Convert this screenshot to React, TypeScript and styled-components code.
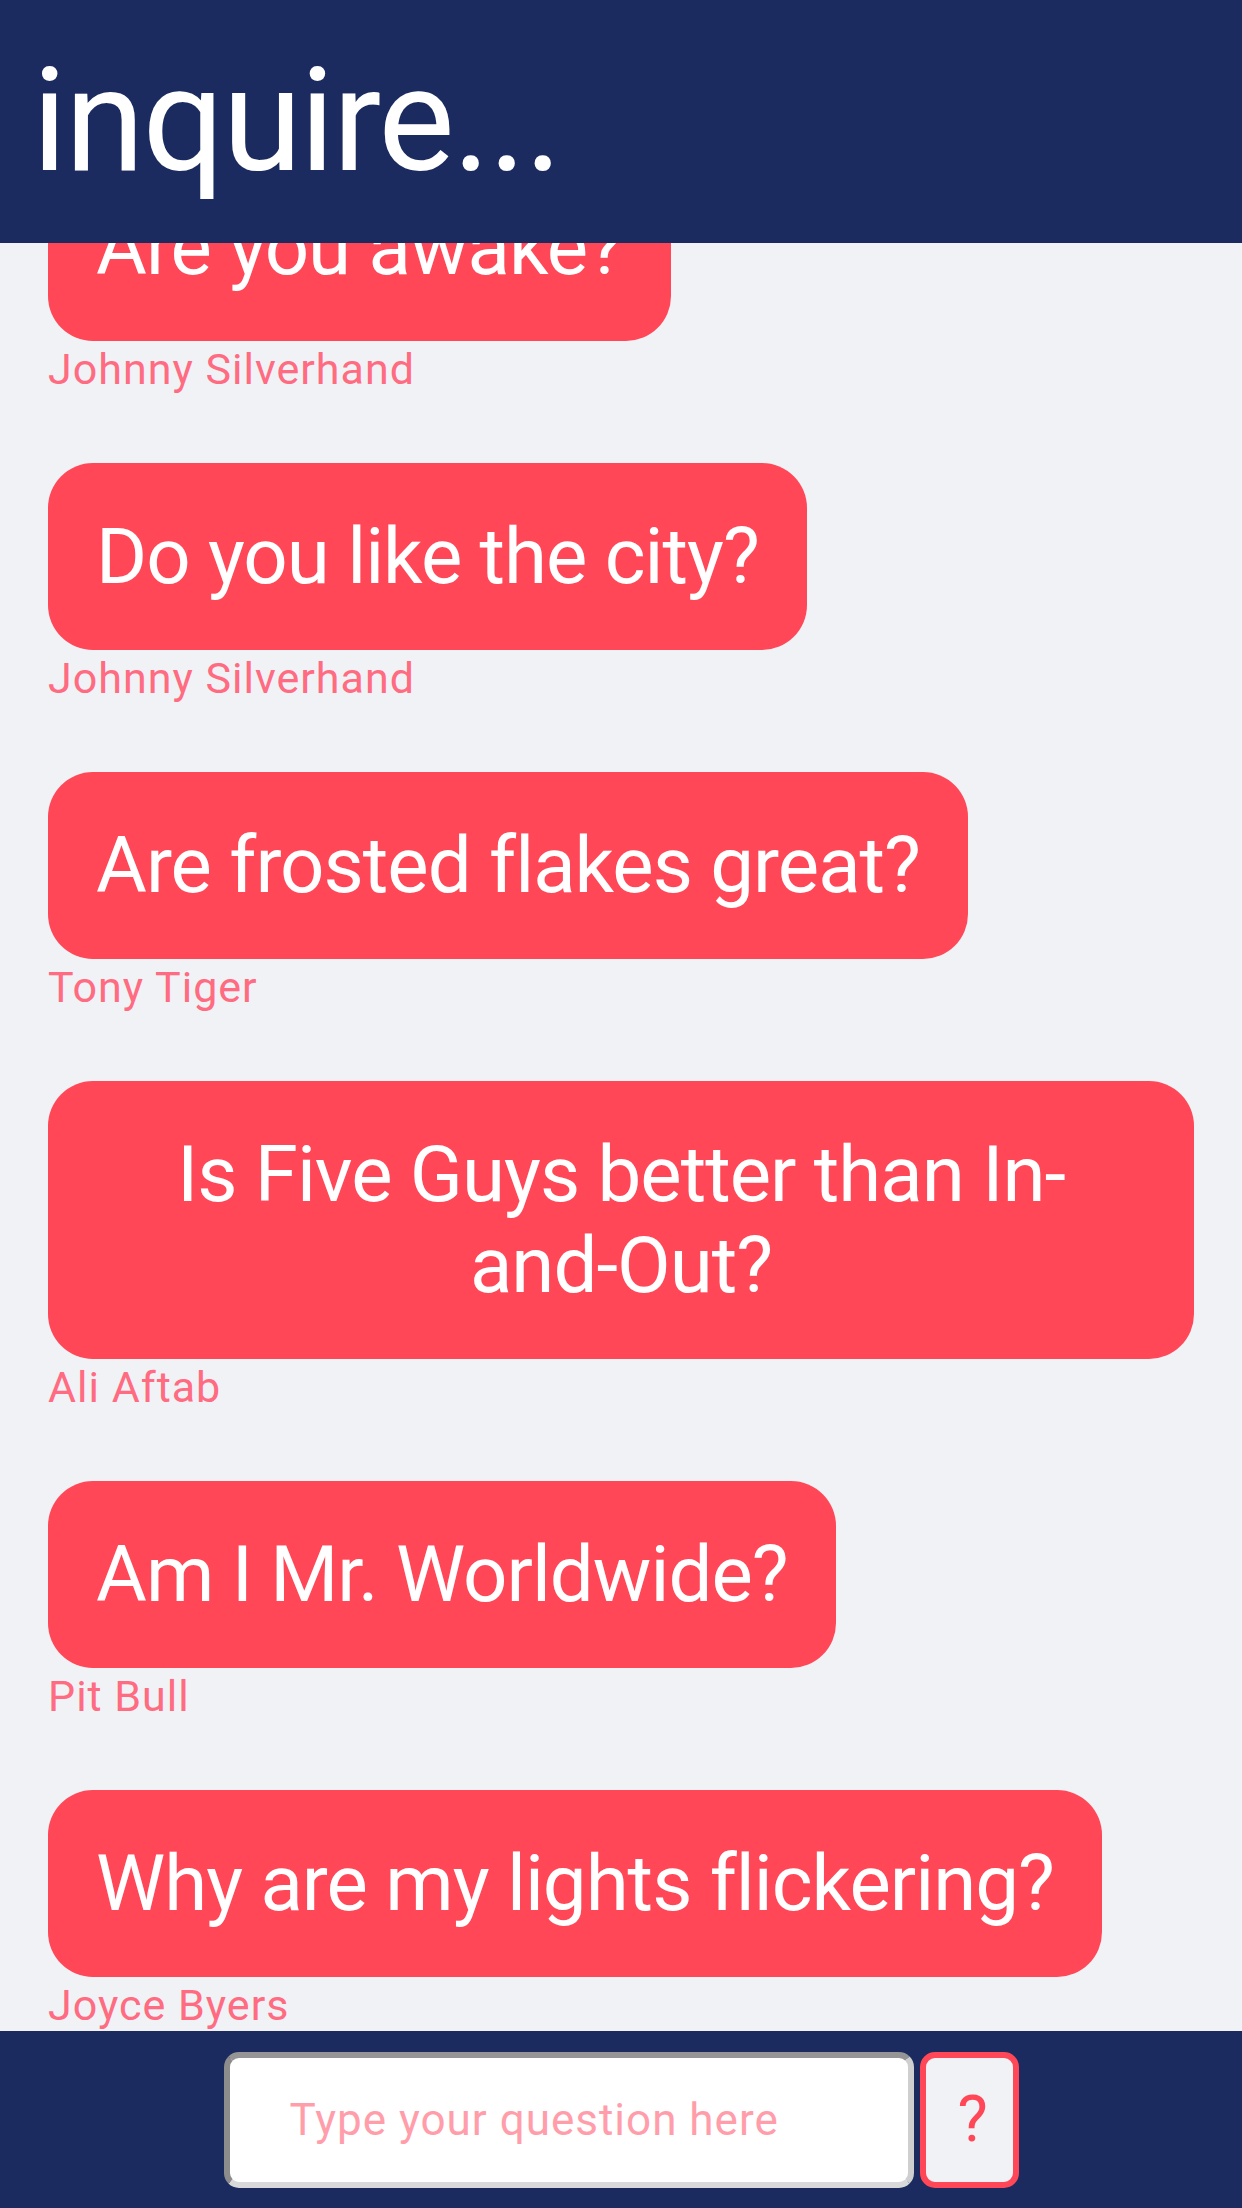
import styled, { createGlobalStyle } from "styled-components";

const GlobalStyle = createGlobalStyle`
  html, body {
    margin: 0;
    padding: 0;
    background: #f1f2f6;
    font-family: Roboto, "Liberation Sans", sans-serif;
  }
`;

const Page = styled.div`
  width: 1242px;
  height: 2208px;
  overflow: hidden;
  position: relative;
  background: #f1f2f6;
`;

const Header = styled.header`
  position: fixed;
  top: 0;
  left: 0;
  right: 0;
  height: 243px;
  display: flex;
  align-items: center;
  padding: 0 32px;
  background: #1b2b5f;
  z-index: 10;
`;

const Title = styled.h1`
  margin: 0;
  color: #fff;
  font-weight: 400;
  font-size: 144px;
  line-height: 1.17;
  letter-spacing: -2px;
`;

const Feed = styled.main`
  display: flex;
  flex-direction: column;
  align-items: flex-start;
  /* list is scrolled: first bubble sits partly under the header */
  padding: 154px 48px 0;
`;

const Item = styled.div`
  display: flex;
  flex-direction: column;
  align-items: flex-start;
  max-width: 100%;
  margin-bottom: 69px;
`;

const Bubble = styled.div`
  background: #ff4757;
  color: #fff;
  border-radius: 45px;
  padding: 48px;
  font-size: 78px;
  line-height: 91px;
  letter-spacing: -1px;
  text-align: center;
`;

const Author = styled.span`
  margin-top: 4px;
  color: #ff6b81;
  font-size: 43px;
  line-height: 49px;
  letter-spacing: 1px;
`;

const Footer = styled.footer`
  position: fixed;
  left: 0;
  right: 0;
  bottom: 0;
  height: 177px;
  display: flex;
  justify-content: center;
  align-items: center;
  gap: 6px;
  background: #1b2b5f;
  z-index: 10;
`;

const QuestionInput = styled.input`
  box-sizing: border-box;
  width: 690px;
  height: 136px;
  padding: 0 60px;
  border: 6px solid #cfcfcf;
  border-top-color: #959595;
  border-left-color: #8c8c8c;
  border-right-color: #cfcfcf;
  border-bottom-color: #d9d9d9;
  border-radius: 15px;
  background: #fff;
  font-family: Roboto, "Liberation Sans", sans-serif;
  font-size: 44px;
  letter-spacing: 1px;
  color: #ff4757;
  outline: none;

  &::placeholder {
    color: #ff9eaa;
  }
`;

const AskButton = styled.button`
  box-sizing: border-box;
  width: 99px;
  height: 136px;
  padding: 0 0 0 32px;
  border: 6px solid #ff4757;
  border-radius: 15px;
  background: #f1f2f6;
  color: #ff4757;
  font-family: Roboto, "Liberation Sans", sans-serif;
  font-size: 64px;
  text-align: left;
`;

// \u2060 keeps "and-Out?" together so the line breaks after "In-"
const questions = [
  { text: "Are you awake?", author: "Johnny Silverhand" },
  { text: "Do you like the city?", author: "Johnny Silverhand" },
  { text: "Are frosted flakes great?", author: "Tony Tiger" },
  { text: "Is Five Guys better than In-and-\u2060Out?", author: "Ali Aftab" },
  { text: "Am I Mr. Worldwide?", author: "Pit Bull" },
  { text: "Why are my lights flickering?", author: "Joyce Byers" },
];

export default function App() {
  return (
    <Page>
      <GlobalStyle />
      <Header>
        <Title>inquire...</Title>
      </Header>

      <Feed>
        {questions.map((q, i) => (
          <Item key={i}>
            <Bubble>{q.text}</Bubble>
            <Author>{q.author}</Author>
          </Item>
        ))}
      </Feed>

      <Footer>
        <QuestionInput placeholder="Type your question here" />
        <AskButton>?</AskButton>
      </Footer>
    </Page>
  );
}
